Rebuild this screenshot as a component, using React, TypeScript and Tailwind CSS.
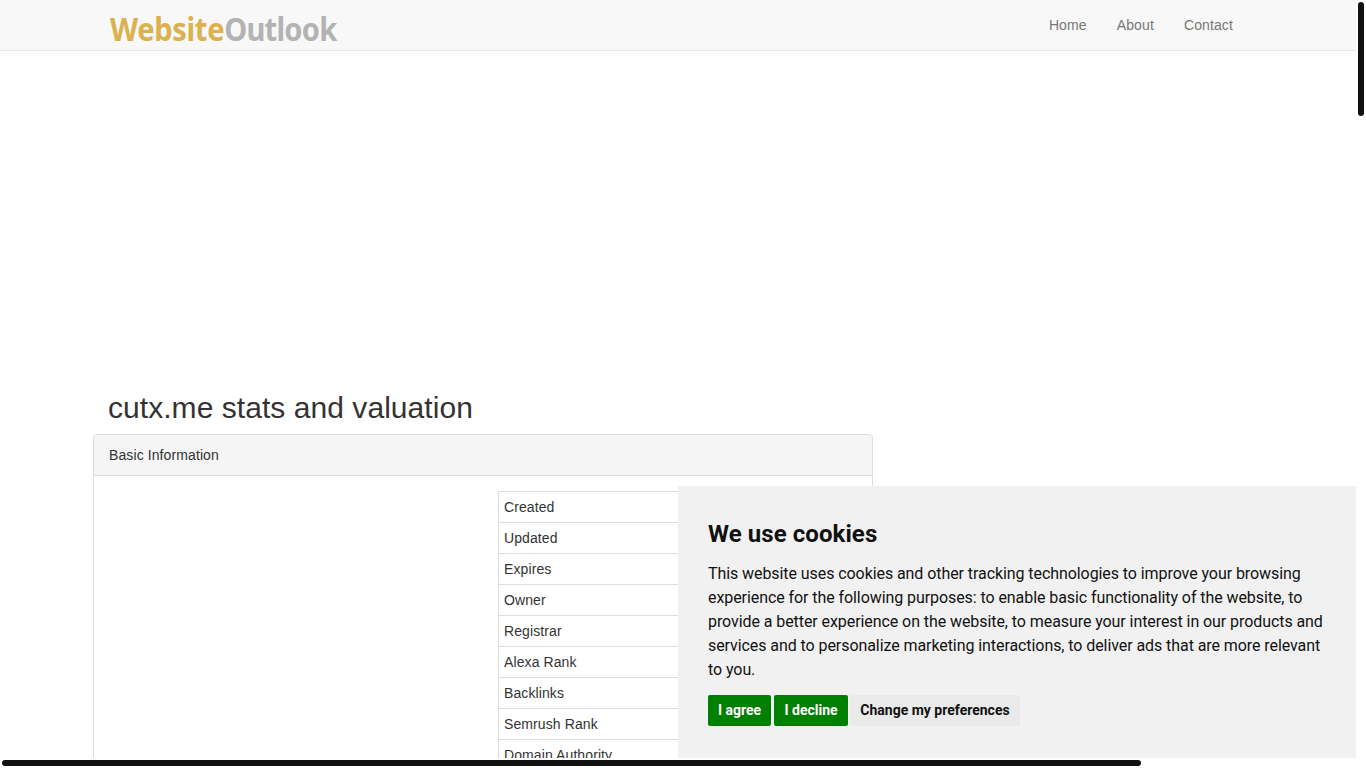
const rows = ["Created", "Updated", "Expires", "Owner", "Registrar", "Alexa Rank", "Backlinks", "Semrush Rank", "Domain Authority"];

export default function App() {
  return (
    <div className="relative h-[768px] w-[1366px] overflow-hidden bg-white font-['Liberation_Sans',sans-serif] text-[14px] leading-[20px] text-[#333] [text-rendering:optimizeSpeed]">
      <div className="relative h-[758px] w-[1356px] overflow-hidden">
        <nav className="h-[51px] border-b border-[#e7e7e7] bg-[#f8f8f8]">
          <div className="mx-auto flex h-[50px] w-[1170px] items-center justify-between pl-[17px] pr-[30px]">
            <div className="mt-[7px] origin-left scale-x-[0.91] whitespace-nowrap font-['Noto_Sans',sans-serif] text-[32px] font-bold leading-[40px] tracking-[-0.4px]">
              <span className="text-[#dcb24f]">Website</span>
              <span className="tracking-[-0.85px] text-[#b3b3b3]">Outlook</span>
            </div>
            <div className="flex gap-[30px] tracking-[0.12px] text-[#777]">
              <span>Home</span>
              <span>About</span>
              <span>Contact</span>
            </div>
          </div>
        </nav>
        <main className="mx-auto w-[1170px]">
          <h1 className="mt-[340px] mb-[10px] pl-[15px] text-[30px] leading-[33px] font-normal tracking-[0.05px] text-[#333]">cutx.me stats and valuation</h1>
          <section className="h-[400px] w-[780px] rounded-[4px] border border-[#ddd] tracking-[0.1px]">
            <div className="h-[41px] rounded-t-[3px] border-b border-[#ddd] bg-[#f5f5f5] px-[15px] py-[10px]">Basic Information</div>
            <div className="flex justify-end p-[15px]">
              <div className="w-[359px] border-t border-l border-r border-[#ddd]">
                {rows.map((r) => (
                  <div key={r} className="h-[31px] border-b border-[#ddd] px-[5px] py-[5px]">{r}</div>
                ))}
              </div>
            </div>
          </section>
        </main>
        <aside className="absolute bottom-0 right-0 h-[272px] w-[678px] bg-[#f1f1f1] p-[30px] font-['Roboto',sans-serif] text-[#111]">
          <h2 className="mb-[13px] mt-[3px] text-[24px] leading-[30px] font-bold tracking-[0.07px]">We use cookies</h2>
          <p className="text-[16px] leading-[24px] tracking-[-0.075px]">This website uses cookies and other tracking technologies to improve your browsing experience for the following purposes: to enable basic functionality of the website, to provide a better experience on the website, to measure your interest in our products and services and to personalize marketing interactions, to deliver ads that are more relevant to you.</p>
          <div className="mt-[13px] flex h-[31px] text-[14px] font-bold leading-[31px]">
            <button className="w-[63px] rounded-[2px] bg-[#008000] text-white">I agree</button>
            <button className="ml-[3px] w-[74px] rounded-[2px] bg-[#008000] text-white">I decline</button>
            <button className="ml-[2px] w-[170px] rounded-[2px] bg-[#eaeaea] text-[#111]">Change my preferences</button>
          </div>
        </aside>
      </div>
      <div className="absolute left-[1358px] top-[2px] h-[114px] w-[6px] rounded-[3px] bg-[#111]"></div>
      <div className="absolute left-[2px] top-[760px] h-[6px] w-[1139px] rounded-[3px] bg-[#111]"></div>
    </div>
  );
}
